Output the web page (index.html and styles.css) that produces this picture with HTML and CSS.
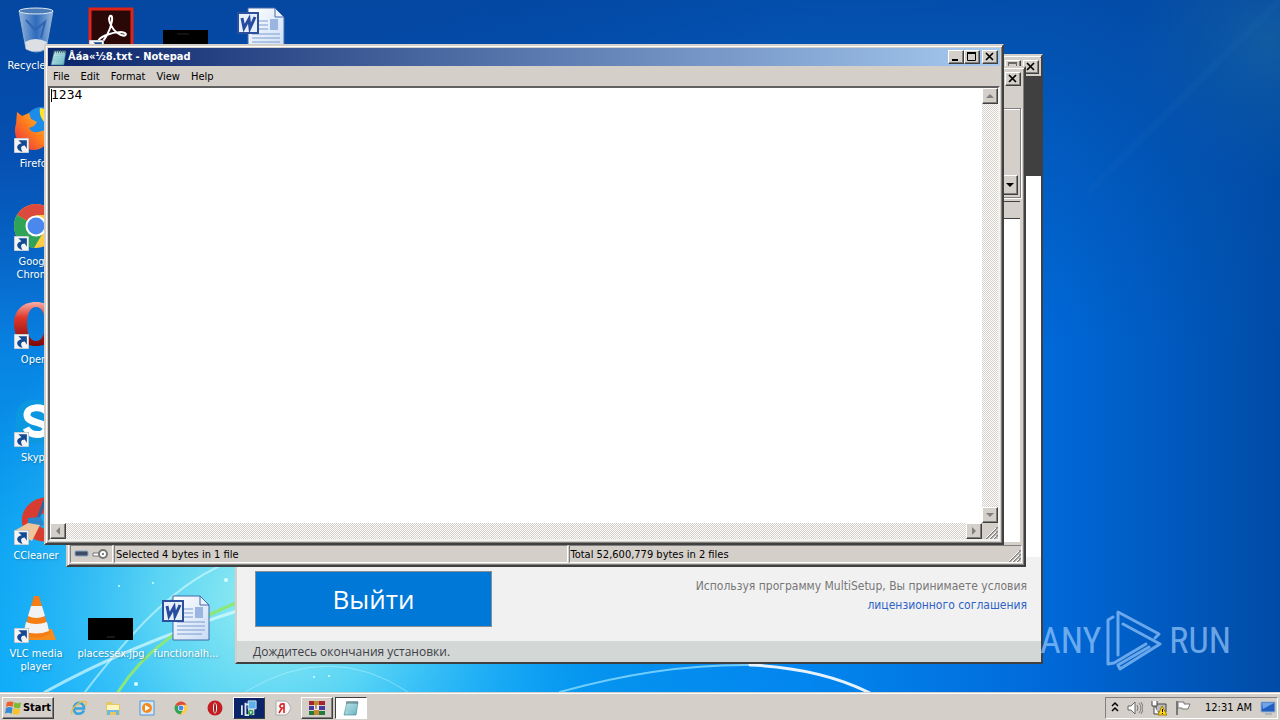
FILE: index.html
```html
<!DOCTYPE html>
<html lang="en">
<head>
<meta charset="utf-8">
<title>Desktop</title>
<link rel="stylesheet" href="styles.css">
</head>
<body>
<svg class="defs" width="0" height="0" aria-hidden="true">
  <defs>
    <linearGradient id="gOpera" x1="0" y1="0" x2="0" y2="1"><stop offset="0" stop-color="#f6b0a8"/><stop offset=".35" stop-color="#e0382c"/><stop offset="1" stop-color="#7c0808"/></linearGradient>
    <linearGradient id="gPage" x1="0" y1="0" x2="1" y2="1"><stop offset="0" stop-color="#fff"/><stop offset="1" stop-color="#c8dcf6"/></linearGradient>
    <linearGradient id="gPad" x1="0" y1="0" x2="1" y2="1"><stop offset="0" stop-color="#d9f6f6"/><stop offset="1" stop-color="#5fb0be"/></linearGradient>
    <linearGradient id="gGlass" x1="0" y1="0" x2="1" y2="0"><stop offset="0" stop-color="#c8dcf0" stop-opacity=".75"/><stop offset=".5" stop-color="#4c84cc" stop-opacity=".6"/><stop offset="1" stop-color="#c0d8f0" stop-opacity=".8"/></linearGradient>
    <linearGradient id="gFox" x1="1" y1="0" x2="0" y2="1"><stop offset="0" stop-color="#ffd43a"/><stop offset=".5" stop-color="#ff7c1c"/><stop offset="1" stop-color="#e8264c"/></linearGradient>
    <symbol id="arrow" viewBox="0 0 14 14"><path d="M0 0h14v14H0z" fill="#f4f4f4" stroke="#9aa8b8"/><path d="M4 2h8v8l-2-3c-4 0-4 3-2 6-6-1-7-7-1-8z" fill="#134a94"/></symbol>
    <symbol id="word" viewBox="0 0 48 48"><path d="M11 2h27l9 9v35H11z" fill="url(#gPage)" stroke="#4468a8"/><path d="M38 2v9h9z" fill="#e9f2ff" stroke="#4468a8"/><path d="M22 15h9M22 19h9M22 23h9M15 28h28M15 32h28M15 36h28M15 40h25" stroke="#7c9cd0"/><path d="M33 13h8v11h-8z" fill="#9ab6e0"/><path d="M1 7h20v20H1z" fill="#e7effb" stroke="#2c509c" stroke-width="2"/><path d="M5 12l2 10 5-9 1 9 5-11" fill="none" stroke="#274b9f" stroke-width="3"/></symbol>
    <symbol id="chrome" viewBox="0 0 48 48"><circle cx="24" cy="24" r="22" fill="#fc4"/><path d="M24 24L5 13A22 22 0 0 1 43 13H24z" fill="#dc4a3d"/><path d="M24 24L5 13a22 22 0 0 0 17 33l10-17z" fill="#2fa458"/><circle cx="24" cy="24" r="10.500" fill="#fff"/><circle cx="24" cy="24" r="8.500" fill="#4a88ee"/></symbol>
    <symbol id="opera" viewBox="0 0 48 48"><path fill-rule="evenodd" d="M24 2C10 2 2 11 2 24s8 22 22 22 22-9 22-22S38 2 24 2zm0 5c6 0 9 7 9 17s-3 17-9 17-9-7-9-17 3-17 9-17z" fill="url(#gOpera)"/></symbol>
    <symbol id="pad" viewBox="0 0 16 16"><path d="M4 2h11l-2 13H1z" fill="url(#gPad)" stroke="#3e7f90" stroke-width=".6"/><path d="M4 5h9M4 7h9M3 9h9M3 11h9" stroke="#86c2cc" stroke-width=".6"/><path d="M4 1v3M6 1v3M8 1v3M10 1v3M12 1v3M14 1v3" stroke="#445e60" stroke-width=".8"/></symbol>
    <symbol id="grip" viewBox="0 0 12 12"><path d="M0 12L12 0M4 12l8-8M8 12l4-4" stroke="#808080" stroke-width="1.500"/><path d="M1 12L12 1M5 12l7-7M9 12l3-3" stroke="#fff" transform="translate(-2 0)"/></symbol>
    <symbol id="close" viewBox="0 0 10 10"><path d="M1 1l7 7M8 1L1 8" stroke="#000" stroke-width="1.700"/></symbol>
    <symbol id="max" viewBox="0 0 10 10"><path d="M.5 1h8v7.500h-8z" fill="none" stroke="#000"/><path d="M0 1h9" stroke="#000" stroke-width="2"/></symbol>
  </defs>
</svg>

<main class="desktop">
  <svg class="wallpaper" viewBox="0 0 1280 692" preserveAspectRatio="none" aria-hidden="true">
    <defs>
      <linearGradient id="w1" x1="0" y1="0" x2="0" y2="1"><stop offset="0" stop-color="#0448ab"/><stop offset=".22" stop-color="#0754be"/><stop offset=".5" stop-color="#0882e2"/><stop offset=".78" stop-color="#06a0f0"/><stop offset="1" stop-color="#08aaf8"/></linearGradient>
      <linearGradient id="w2" x1="0" y1="0" x2="1" y2="0"><stop offset=".3" stop-color="#0064d4" stop-opacity="0"/><stop offset=".62" stop-color="#0078ec" stop-opacity=".7"/><stop offset=".83" stop-color="#0067d6"/><stop offset="1" stop-color="#004ba6"/></linearGradient>
      <linearGradient id="w3" x1="0" y1="0" x2="0" y2="1"><stop offset="0" stop-color="#04479f" stop-opacity=".8"/><stop offset=".5" stop-color="#0450a8" stop-opacity="0"/></linearGradient>
      <radialGradient id="w4" gradientUnits="userSpaceOnUse" cx="270" cy="600" r="330"><stop offset="0" stop-color="#9cf0f0"/><stop offset=".35" stop-color="#68dcf4" stop-opacity=".85"/><stop offset="1" stop-color="#20b0ff" stop-opacity="0"/></radialGradient>
      <radialGradient id="w5" gradientUnits="userSpaceOnUse" cx="1270" cy="40" r="140"><stop offset="0" stop-color="#2c7ca0" stop-opacity=".35"/><stop offset="1" stop-color="#1a68a8" stop-opacity="0"/></radialGradient>
    </defs>
    <path d="M0 0h1280v692H0z" fill="url(#w1)"/>
    <path d="M0 0h1280v692H0z" fill="url(#w2)"/>
    <path d="M0 0h1280v692H0z" fill="url(#w3)"/>
    <path d="M0 0h1280v692H0z" fill="url(#w4)"/>
    <path d="M0 0h1280v692H0z" fill="url(#w5)"/>
    <g fill="none" stroke-linecap="round">
      <path d="M45 692Q130 645 240 610" stroke="#e4ffff" stroke-width="3" opacity=".65"/>
      <path d="M85 692C125 640 175 580 235 560" stroke="#e4ffff" stroke-width="2" opacity=".55"/>
      <path d="M118 692C145 650 180 626 236 603" stroke="#8be878" stroke-width="3"/>
      <path d="M245 692Q330 640 408 692" stroke="#c8f8ff" opacity=".45"/>
      <path d="M560 692Q660 664 750 665" stroke="#8cdcff" stroke-width="2" opacity=".8"/>
      <path d="M750 665Q820 668 870 693" stroke="#fff" stroke-width="3" opacity=".9"/>
      <path d="M1280 0L1090 190" stroke="#3c8cd0" opacity=".06" stroke-width="8"/>
    </g>
    <g fill="#d8ffff"><circle cx="119" cy="586" r="1"/><circle cx="153" cy="583" r="1"/><circle cx="226" cy="580" r="2"/><circle cx="136" cy="684" r="2"/><circle cx="314" cy="677" r="1"/><circle cx="329" cy="676" r="1"/></g>
  </svg>

  <section class="icons" aria-label="Desktop icons">
    <div class="item c1 r1"><svg viewBox="0 0 48 48"><path d="M7 5l7 38q11 6 20 0l7-38z" fill="url(#gGlass)" stroke="#8caccc"/><path d="M13 36q10-6 22 0l-2 7q-9 5-19 0z" fill="#dce0e4"/><path d="M14 14l9 10 10-8-4 16" fill="none" stroke="#2f64b0" stroke-width="2"/><ellipse cx="24" cy="5" rx="17" ry="3" fill="#4c7cb8" stroke="#dce8f0"/></svg><span>Recycle Bin</span></div>
    <div class="item c1 r2"><svg viewBox="0 0 48 48"><circle cx="30" cy="21" r="18" fill="#1d8ce8"/><path d="M28 4c9 1 18 8 19 18l-12-2c-6-4-8-10-7-16z" fill="#ffe22e"/><path d="M5 8l5 4 7-3 2 6 6 3-3 4-5 2c2 6 12 5 19 0 5 10-3 22-14 22C8 46 0 32 4 20z" fill="url(#gFox)"/></svg><svg class="cut"><use href="#arrow"/></svg><span>Firefox</span></div>
    <div class="item c1 r3"><svg><use href="#chrome"/></svg><svg class="cut"><use href="#arrow"/></svg><span>Google Chrome</span></div>
    <div class="item c1 r4"><svg><use href="#opera"/></svg><svg class="cut"><use href="#arrow"/></svg><span>Opera</span></div>
    <div class="item c1 r5"><svg viewBox="0 0 48 48"><rect x="4" y="2" width="42" height="43" rx="16" fill="#0b98e0"/><path d="M35 14C30 8 15 8 15 17c0 9 19 6 19 14-2 8-16 7-20-1" fill="none" stroke="#fff" stroke-width="7"/></svg><svg class="cut"><use href="#arrow"/></svg><span>Skype</span></div>
    <div class="item c1 r6"><svg viewBox="0 0 48 48"><path fill-rule="evenodd" d="M46 3C26-4 8 10 10 27s24 24 36 14L36 32c-10 4-14-12-3-15z" fill="#d83c30"/><path d="M33 4L25 25" stroke="#2868a8" stroke-width="3"/><path d="M16 22l13-1 3 8-16 4z" fill="#2c86cc"/><path d="M16 27L2 35l18 10 8-16z" fill="#eec49a"/></svg><svg class="cut"><use href="#arrow"/></svg><span>CCleaner</span></div>
    <div class="item c1 r7"><svg viewBox="0 0 48 48"><path d="M12 35h28l4 11H6z" fill="#f68b1e"/><path d="M22 2h5l11 38q-14 7-27 0z" fill="#f47d14"/><path d="M19 12h11l3 10q-9 4-17 0zM14 28q10 4 21 0l2 9q-13 5-25 0z" fill="#f2f2f2"/></svg><svg class="cut"><use href="#arrow"/></svg><span>VLC media player</span></div>
    <div class="item c2 r1"><svg viewBox="0 0 48 48"><path d="M3 3h42v43H3z" fill="#2a0808" stroke="#e02418" stroke-width="3"/><path d="M12 36c-3-4 12-10 22-10 8 1 5 5 0 3C26 26 20 14 23 10c4-2 2 10-3 19-4 7-7 10-8 7z" fill="none" stroke="#fff" stroke-width="2"/></svg><svg class="cut"><use href="#arrow"/></svg></div>
    <div class="item c3 r1"><svg viewBox="0 0 48 48"><path d="M1 24h45v22H1z" fill="#000"/><path d="M15 28h12" stroke="#222"/></svg></div>
    <div class="item c4 r1"><svg><use href="#word"/></svg></div>
    <div class="item c2 r7"><svg viewBox="0 0 48 48"><path d="M1 24h45v22H1z" fill="#000"/><path d="M20 43h8" stroke="#333"/></svg><span>placessex.jpg</span></div>
    <div class="item c3 r7"><svg><use href="#word"/></svg><span>functionalh...</span></div>
  </section>

  <section class="window setup" aria-label="MultiSetup">
    <header class="bar idle"><span class="controls"><button class="btn" aria-label="Maximize MultiSetup" disabled><svg class="gray"><use href="#max"/></svg></button><button class="btn gap" aria-label="Close MultiSetup"><svg><use href="#close"/></svg></button></span></header>
    <div class="banner"></div>
    <div class="blank"></div>
    <div class="actions">
      <button class="exit">Выйти</button>
      <p class="terms">Используя программу MultiSetup, Вы принимаете условия<br><a href="#">лицензионного соглашения</a></p>
    </div>
    <footer class="wait">Дождитесь окончания установки.</footer>
  </section>

  <section class="window archive" aria-label="Archive">
    <header class="bar idle"><span class="controls"><button class="btn" aria-label="Close archive"><svg><use href="#close"/></svg></button></span></header>
    <div class="tools"><button class="btn drop" aria-label="Open folder list"><svg viewBox="0 0 8 8"><path d="M0 2h8L4 6z"/></svg></button></div>
    <div class="columns"></div>
    <div class="list"></div>
    <footer class="status">
      <span class="cell marks"><svg viewBox="0 0 36 12"><rect x="3" y="3" width="13" height="5" rx="1" fill="#3e4d64" stroke="#8ba4c4"/><path d="M21 5h9v3h-9z" fill="#fff" stroke="#777"/><circle cx="31" cy="6" r="4" fill="#fff" stroke="#777" stroke-width="2"/><circle cx="31" cy="6" r="1" fill="#555"/></svg></span>
      <span class="cell">Selected 4 bytes in 1 file</span>
      <span class="cell">Total 52,600,779 bytes in 2 files</span>
      <svg class="grip"><use href="#grip"/></svg>
    </footer>
  </section>

  <section class="window notepad" aria-label="Notepad">
    <header class="bar"><svg class="app"><use href="#pad"/></svg><h1>Åáa«½8.txt - Notepad</h1>
      <span class="controls"><button class="btn" aria-label="Minimize"><svg viewBox="0 0 10 10"><path d="M1 8h6" stroke="#000" stroke-width="2"/></svg></button><button class="btn" aria-label="Maximize"><svg><use href="#max"/></svg></button><button class="btn gap" aria-label="Close"><svg><use href="#close"/></svg></button></span></header>
    <nav class="menu"><button>File</button><button>Edit</button><button>Format</button><button>View</button><button>Help</button></nav>
    <div class="editor">
      <textarea aria-label="Document text" spellcheck="false">1234</textarea>
      <i class="caret"></i>
      <div class="track down"><button class="btn" aria-label="Scroll up"><svg viewBox="0 0 8 8"><path d="M0 6h8L4 2z"/></svg></button><button class="btn" aria-label="Scroll down"><svg viewBox="0 0 8 8"><path d="M0 2h8L4 6z"/></svg></button></div>
      <div class="track"><button class="btn" aria-label="Scroll left"><svg viewBox="0 0 8 8"><path d="M6 0v8L2 4z"/></svg></button><button class="btn" aria-label="Scroll right"><svg viewBox="0 0 8 8"><path d="M2 0v8l4-4z"/></svg></button></div>
      <div class="corner"><svg class="grip"><use href="#grip"/></svg></div>
    </div>
  </section>

  <div class="brand"><span>ANY</span><svg viewBox="0 0 58 62" fill="none" stroke="currentColor" stroke-width="3" stroke-linejoin="round" stroke-linecap="round"><path d="M7 7L2 10v44l6-1 32-19"/><path d="M12 45V2l41 22-4 4"/><path d="M17 14l37 20-40 25-2-4 31-18"/></svg><span>RUN</span></div>
</main>

<footer class="taskbar">
  <button class="btn start"><svg viewBox="0 0 18 16"><path d="M2 2q4-2 7 0L8 7Q5 5 1 7z" fill="#ec602c"/><path d="M10 2q4 2 7 0l-1 6q-4 1-7-1z" fill="#7cba32"/><path d="M1 8q4-2 7 0l-1 6q-4-2-7 0z" fill="#378ad8"/><path d="M9 8q4 2 7 1l-1 5q-4 2-7 0z" fill="#f8c424"/></svg>Start</button>
  <nav class="quick" aria-label="Programs">
    <button class="task" aria-label="Internet Explorer"><svg viewBox="0 0 16 16" fill="none"><path d="M3 8.500h10C13 1 3 1 3 8.500s8 6 10 2" stroke="#37a4e0" stroke-width="2.600"/><path d="M1 14C-1 9 10-1 15 2c1 1 0 3-1 4" stroke="#e9bd3c" stroke-width="1.200"/></svg></button>
    <button class="task" aria-label="Explorer"><svg viewBox="0 0 16 16"><path d="M1 2h6l1 2h7v11H1z" fill="#e6c860"/><path d="M2 5h12v5H2z" fill="#fff4c0"/><path d="M2 15v-5h12v5h-3v-3H5v3z" fill="#6cb8e6"/></svg></button>
    <button class="task" aria-label="Media Player"><svg viewBox="0 0 16 16"><path d="M1 1h14v14H1z" fill="#d4e8fa" stroke="#5594d4"/><circle cx="8" cy="8" r="5" fill="#f38a1c"/><path d="M6 5l5 3-5 3z" fill="#fff"/></svg></button>
    <button class="task" aria-label="Chrome"><svg class="small"><use href="#chrome"/></svg></button>
    <button class="task" aria-label="Opera"><svg viewBox="0 0 16 16"><circle cx="8" cy="8" r="7.500" fill="#c41c20"/><ellipse cx="8" cy="8" rx="2" ry="5.500" fill="#fff"/><ellipse cx="8" cy="8" rx="1" ry="5" fill="#902020"/></svg></button>
    <button class="task flash" aria-label="Setup"><svg viewBox="0 0 18 18"><path d="M8 1h9v9H8z" fill="#5eb0ec" stroke="#d8e4f0"/><path d="M1 6v11M5 5h4M5 3v14h4" fill="none" stroke="#dce4ee" stroke-width="2"/><path d="M8 10h7v7H8z" fill="#d8dfe4"/><circle cx="11" cy="14" r="3" fill="#2b9a44"/><path d="M9.500 13h3L11 16z" fill="#fff"/></svg></button>
    <button class="task" aria-label="Yandex"><svg viewBox="0 0 16 16"><path d="M1 1h9q3 0 6 7-3 7-6 7H1z" fill="#f8f8f8" stroke="#aaa"/><path d="M9 13V4C4 3 4 8 7 8h2M7 8l-3 5" fill="none" stroke="#e02020" stroke-width="1.600"/></svg></button>
    <button class="btn task" aria-label="WinRAR"><svg viewBox="0 0 16 16"><path d="M0 1h16v4H0z" fill="#a42430"/><path d="M0 6h16v4H0z" fill="#473c9c"/><path d="M0 11h16v4H0z" fill="#247a3c"/><path d="M5 1h5v14H5z" fill="#c48a30"/><path d="M5 5h5v5H5z" fill="#f0e8d8"/><path d="M7 5v4" stroke="#744"/></svg></button>
    <button class="btn task active" aria-label="Notepad"><svg><use href="#pad"/></svg></button>
  </nav>
  <div class="tray">
    <svg viewBox="0 0 8 14" class="chev"><path d="M1 5l3-3 3 3M1 10l3-3 3 3" fill="none" stroke="#000" stroke-width="1.500"/></svg>
    <svg viewBox="0 0 16 16"><path d="M1 6h3l4-4v12l-4-4H1z" fill="#fff" stroke="#666"/><path d="M10 5q2 3 0 6M12 3q4 5 0 10M14 2q4 6 0 12" fill="none" stroke="#777"/></svg>
    <svg viewBox="0 0 16 16"><path d="M5 4h10v8H5z" fill="#bbb" stroke="#444"/><path d="M1 1v5h5V1M3 6v8h5" fill="#fff" stroke="#444"/><path d="M11 6l5 9H7z" fill="#ffd91c" stroke="#a88000"/><path d="M11.500 9v3M11.500 13v1" stroke="#000"/></svg>
    <svg viewBox="0 0 16 16"><path d="M2 1v14" stroke="#777" stroke-width="2"/><path d="M3 2h6v2h6l-2 5H7V8H3z" fill="#fff" stroke="#777"/></svg>
    <time>12:31 AM</time>
    <svg viewBox="0 0 16 16"><path d="M1 2h14v10H1z" fill="#235fc0" stroke="#9cb4cc"/><path d="M2 3h12L3 9z" fill="#6fa4ea"/><path d="M5 14h7" stroke="#89a"/></svg>
  </div>
</footer>
</body>
</html>
```
FILE: styles.css
```css
* { box-sizing: border-box; }

body {
  --face: #d4cfc9;
  --ui: "DejaVu Sans Condensed", "DejaVu Sans", sans-serif;
  --segoe: "Open Sans", "Noto Sans", sans-serif;
  margin: 0;
  height: 100vh;
  display: flex;
  flex-direction: column;
  overflow: hidden;
  font: 11px/13px var(--ui);
  color: #000;
}

button {
  font: inherit;
  color: inherit;
  padding: 0;
  border: 0;
  background: none;
}

.defs { position: absolute; }

.desktop {
  flex: 1;
  position: relative;
  min-height: 0;
  overflow: hidden;
}

.wallpaper {
  position: absolute;
  inset: 0;
  width: 100%;
  height: 100%;
}

/* Desktop icons */
.icons {
  position: relative;
  display: grid;
  grid-template-columns: repeat(4, 75px);
  grid-auto-rows: 98px;
}

.item {
  position: relative;
  display: flex;
  flex-direction: column;
  align-items: center;
  gap: 5px;
  padding: 6px 3px 0 0;
  color: #fff;
  text-align: center;
  text-shadow: 1px 1px 2px #0346;
}

.item svg { width: 48px; height: 48px; }
.item .cut { position: absolute; left: 14px; top: 40px; width: 15px; height: 15px; }
.item span { max-width: 68px; white-space: normal; }
.r7 span { max-width: none; width: 68px; }
.c2 span, .c3 span { width: auto; white-space: nowrap; }

.c1 { grid-column: 1; }
.c2 { grid-column: 2; }
.c3 { grid-column: 3; }
.c4 { grid-column: 4; }
.r1 { grid-row: 1; }
.r2 { grid-row: 2; }
.r3 { grid-row: 3; }
.r4 { grid-row: 4; }
.r5 { grid-row: 5; }
.r6 { grid-row: 6; }
.r7 { grid-row: 7; }

/* Classic window frame */
.window {
  position: absolute;
  display: flex;
  flex-direction: column;
  padding: 2px;
  background: var(--face);
  border: 2px solid;
  border-color: var(--face) #404040 #404040 var(--face);
  box-shadow: inset 1px 1px #fff, inset -1px -1px #808080;
}

.bar {
  display: flex;
  align-items: center;
  height: 18px;
  padding: 0 2px;
  background: linear-gradient(90deg, #0a246a, #a6caf0);
  color: #fff;
}

.bar.idle { background: var(--face); }
.bar h1 { margin: 0; padding-left: 1px; font: bold 11px/16px var(--ui); white-space: nowrap; }
.app { width: 17px; height: 17px; }
.controls { display: flex; margin-left: auto; }

.btn {
  display: flex;
  align-items: center;
  justify-content: center;
  background: var(--face);
  border: 1px solid;
  border-color: #fff #404040 #404040 #fff;
  box-shadow: inset -1px -1px #808080;
}

.controls .btn { width: 16px; height: 14px; }
.controls .gap { margin-left: 2px; }
.controls svg { width: 10px; height: 10px; }
.gray { opacity: .5; }
.grip { width: 12px; height: 12px; }

.notepad { left: 44px; top: 44px; width: 960px; height: 501px; }

.menu { display: flex; align-items: center; height: 20px; padding: 0 5px; gap: 11px; }

.editor {
  flex: 1;
  min-height: 0;
  position: relative;
  display: grid;
  grid-template: 1fr 16px / 1fr 16px;
  background: #fff;
  border: 2px solid;
  border-color: #606060 #f4f2ee #f4f2ee #606060;
}

textarea {
  resize: none;
  border: 0;
  outline: 0;
  margin: 0;
  padding: 0 1px;
  font: 13px/14px "DejaVu Sans Mono", monospace;
  color: #000;
  background: #fff;
}

.caret { position: absolute; left: 1px; top: 1px; width: 1px; height: 13px; background: #000; }

.track {
  display: flex;
  justify-content: space-between;
  background: repeating-conic-gradient(#fff 0 25%, var(--face) 0 50%) 0 0 / 2px 2px;
}

.down { flex-direction: column; }
.track .btn { width: 16px; height: 16px; }
.track svg { width: 8px; height: 8px; fill: #808080; }
.corner { display: flex; align-items: flex-end; justify-content: flex-end; background: var(--face); }

.archive { left: 66px; top: 66px; width: 960px; height: 501px; }
.archive .bar { padding: 0 1px 0 2px; }

.tools {
  display: flex;
  align-items: flex-end;
  justify-content: flex-end;
  height: 90px;
  margin: 20px 1px 3px 0;
  padding: 2px;
  border: 1px solid #808080;
  box-shadow: inset 1px 1px #fff, 1px 1px #fff;
}

.drop { width: 16px; height: 20px; }
.drop svg { width: 8px; height: 8px; }
.columns { height: 18px; border: solid #404040; border-width: 1px 0; margin-right: 2px; }
.list { flex: 1; background: #fff; margin-right: 2px; }

.status {
  position: relative;
  display: grid;
  grid-template-columns: 43px 1fr 1fr;
  gap: 1px;
  height: 21px;
  padding-top: 3px;
}

.cell {
  display: flex;
  align-items: center;
  padding-left: 1px;
  border: 1px solid;
  border-color: #808080 #fff #fff #808080;
}

.marks svg { width: 36px; height: 12px; }
.status .grip { position: absolute; right: 1px; bottom: 1px; }

.setup { left: 235px; top: 54px; width: 808px; height: 610px; padding: 2px 0 0; }
.setup .bar { padding: 0 2px; }
.banner { height: 100px; background: #404040; }
.blank { flex: 1; background: #fff; }

.actions {
  display: flex;
  justify-content: space-between;
  height: 84px;
  padding: 14px 14px 14px 18px;
  background: #f1f1f1;
  font: 12px/19px var(--ui);
}

.exit {
  width: 237px;
  background: #0078d7;
  border: 1px solid #8a8f94;
  color: #fff;
  font: 26px/32px var(--segoe);
}

.terms { margin: 6px 0 0; color: #777; text-align: right; }
.terms a { color: #2d63c8; text-decoration: none; }

.wait {
  height: 21px;
  padding-left: 16px;
  background: #d3d7d6;
  color: #404048;
  font: 12px/22px var(--segoe);
}

/* Logo laid over the desktop corner */
.brand {
  position: absolute;
  right: 49px;
  bottom: 20px;
  display: flex;
  align-items: center;
  gap: 5px;
  color: #a4d0ff;
  opacity: .65;
  font: 36px/62px "Liberation Sans Narrow", "Roboto Condensed", Roboto, sans-serif;
}

.brand svg { width: 58px; height: 62px; }

/* Taskbar */
.taskbar {
  display: flex;
  align-items: center;
  height: 28px;
  padding: 2px 2px 0;
  background: var(--face);
  border-top: 1px solid var(--face);
  box-shadow: inset 0 1px #fff;
}

.start { height: 22px; width: 52px; gap: 1px; font: bold 11px/16px var(--ui); }
.start svg { width: 17px; height: 16px; }
.quick { display: flex; gap: 2px; padding-left: 9px; }
.task { width: 32px; height: 22px; display: flex; align-items: center; justify-content: center; }
.task svg { width: 16px; height: 16px; }
.task .small { width: 14px; height: 14px; }
.flash { background: #0a246a; border: 1px solid; border-color: #fff #404040 #404040 #fff; }
.active { background: #fff; border-color: #404040 #fff #fff #404040; box-shadow: none; }

.tray {
  display: flex;
  align-items: center;
  gap: 8px;
  height: 22px;
  margin-left: auto;
  padding: 0 1px 0 5px;
  border: 1px solid;
  border-color: #808080 #fff #fff #808080;
}

.tray svg { width: 16px; height: 16px; }
.tray .chev { width: 8px; height: 14px; }
.tray time { padding-left: 6px; white-space: nowrap; }
```
